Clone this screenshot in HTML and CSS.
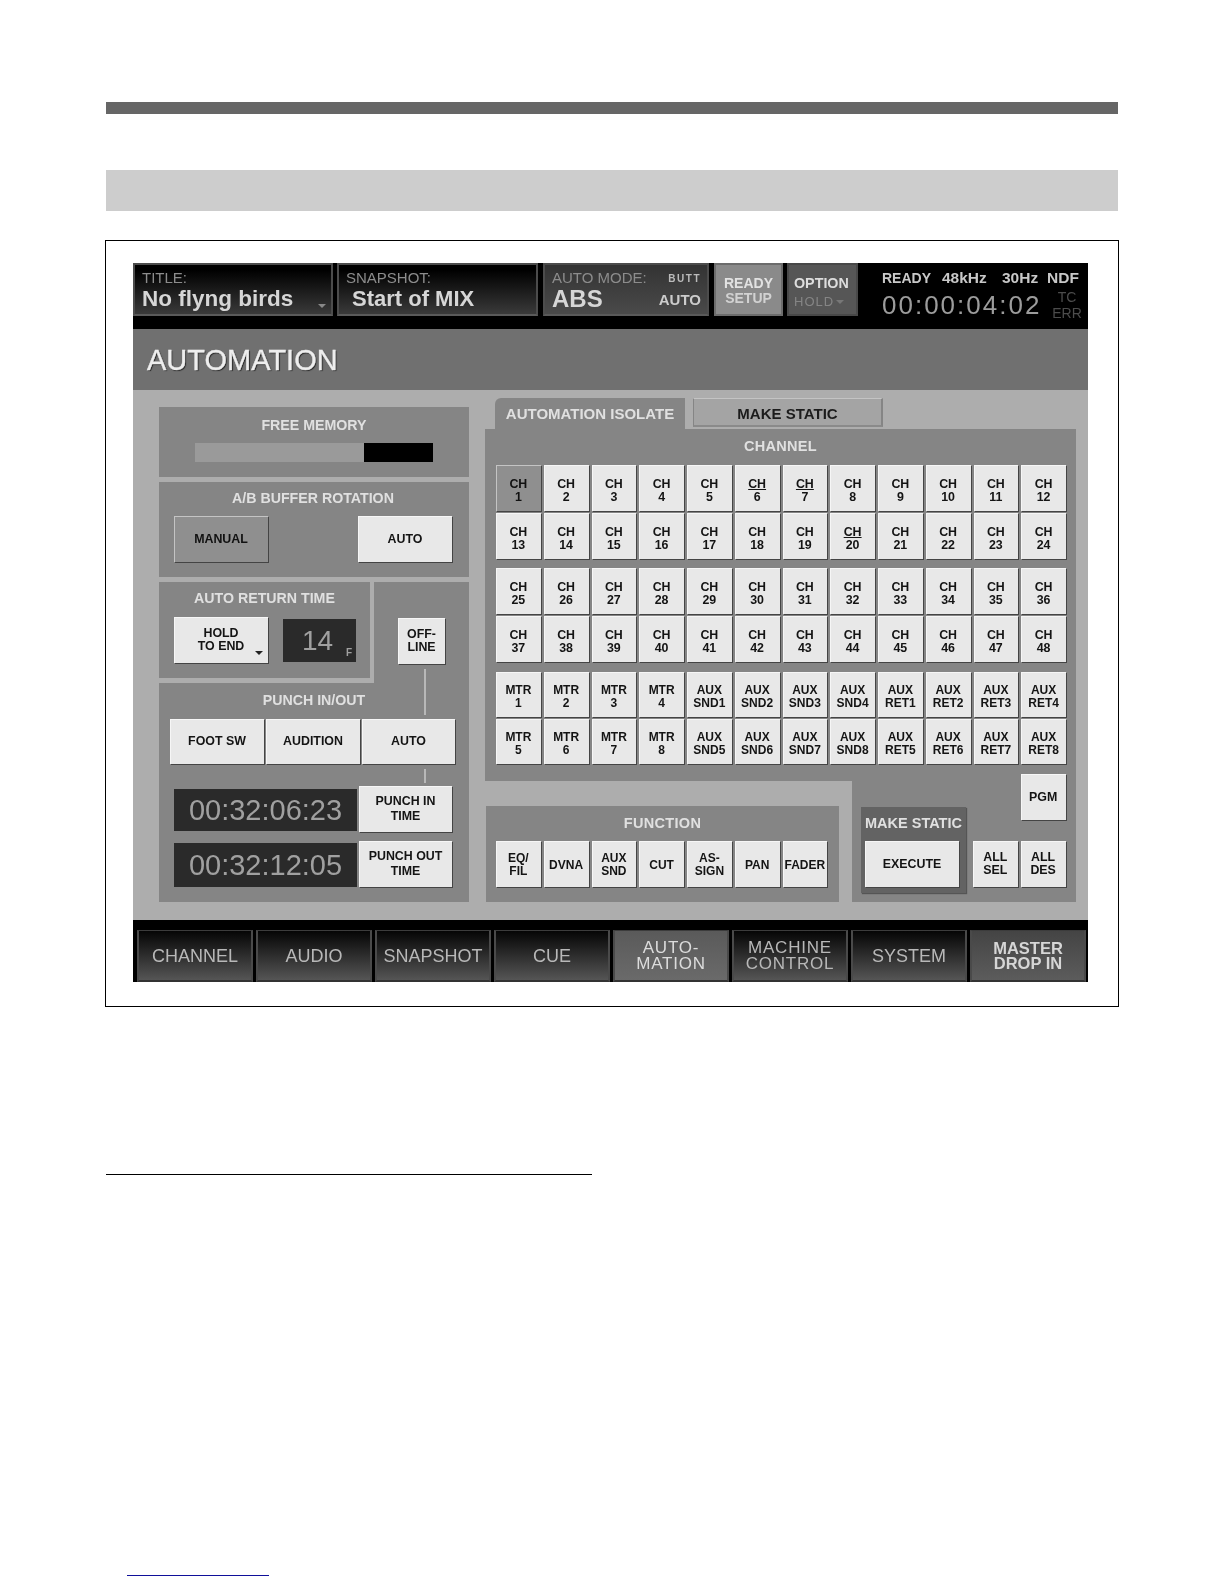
FILE: index.html
```html
<!DOCTYPE html>
<html lang="en">
<head>
<meta charset="utf-8">
<title>Automation</title>
<link rel="stylesheet" href="styles.css">
</head>
<body>
<div class="page">
  <div class="rule-top"></div>
  <div class="rule-grey"></div>
  <div class="figure">
    <div class="screen">
      <header class="head">
        <div class="field field-title">
          <div class="field-label">TITLE:</div>
          <div class="field-value">No flyng birds</div>
          <span class="arrow arrow-title"></span>
        </div>
        <div class="field field-snap">
          <div class="field-label">SNAPSHOT:</div>
          <div class="field-value indent">Start of MIX</div>
        </div>
        <div class="field field-mode">
          <div class="mode-top"><span class="field-label">AUTO MODE:</span><span class="butt">BUTT</span></div>
          <div class="mode-bottom"><span class="field-value abs">ABS</span><span class="mode-auto">AUTO</span></div>
        </div>
        <div class="ready">READY<br><span class="setup">SETUP</span></div>
        <div class="option">
          <div>OPTION</div>
          <div class="hold">HOLD<span class="arrow arrow-hold"></span></div>
        </div>
        <div class="info">
          <div class="info-top"><span>READY</span><span>48kHz</span><span>30Hz</span><span>NDF</span></div>
          <div class="info-bottom">
            <span class="tc">00:00:04:02</span>
            <span class="tc-side">TC<br>ERR</span>
          </div>
        </div>
      </header>

      <div class="title-bar">AUTOMATION</div>

      <main class="work">
        <section class="left">
          <div class="panel free">
            <div class="label">FREE MEMORY</div>
            <div class="meter"><div class="meter-used"></div></div>
          </div>
          <div class="panel buffer">
            <div class="label">A/B BUFFER ROTATION</div>
            <div class="buffer-row">
              <div class="key wide on">MANUAL</div>
              <div class="key wide">AUTO</div>
            </div>
          </div>
          <div class="group">
            <div class="panel ret">
              <div class="label">AUTO RETURN TIME</div>
              <div class="ret-row">
                <div class="key wide hold-key">HOLD<br>TO END<span class="arrow arrow-key"></span></div>
                <div class="lcd lcd-small">14<span class="lcd-unit">F</span></div>
              </div>
            </div>
            <div class="panel off"><div class="key off-key">OFF-<br>LINE</div></div>
            <div class="panel punch">
              <div class="label">PUNCH IN/OUT</div>
              <div class="punch-row">
                <div class="key">FOOT SW</div>
                <div class="key">AUDITION</div>
                <div class="key">AUTO</div>
              </div>
              <div class="time-row first">
                <div class="lcd lcd-time">00:32:06:23</div>
                <div class="key time-key">PUNCH IN<br>TIME</div>
              </div>
              <div class="time-row">
                <div class="lcd lcd-time tall">00:32:12:05</div>
                <div class="key time-key">PUNCH OUT<br>TIME</div>
              </div>
            </div>
            <span class="wire wire-a"></span>
            <span class="wire wire-b"></span>
          </div>
        </section>

        <section class="right">
          <div class="tabs">
            <div class="tab active">AUTOMATION ISOLATE</div>
            <div class="tab">MAKE STATIC</div>
          </div>
          <div class="channel">
            <div class="label channel-label">CHANNEL</div>
            <div class="keys">
              <div class="key on">CH<br>1</div><div class="key">CH<br>2</div><div class="key">CH<br>3</div><div class="key">CH<br>4</div><div class="key">CH<br>5</div><div class="key"><span><u>CH</u><br>6</span></div><div class="key"><span><u>CH</u><br>7</span></div><div class="key">CH<br>8</div><div class="key">CH<br>9</div><div class="key">CH<br>10</div><div class="key">CH<br>11</div><div class="key">CH<br>12</div>
              <div class="key">CH<br>13</div><div class="key">CH<br>14</div><div class="key">CH<br>15</div><div class="key">CH<br>16</div><div class="key">CH<br>17</div><div class="key">CH<br>18</div><div class="key">CH<br>19</div><div class="key"><span><u>CH</u><br>20</span></div><div class="key">CH<br>21</div><div class="key">CH<br>22</div><div class="key">CH<br>23</div><div class="key">CH<br>24</div>
            </div>
            <div class="keys second">
              <div class="key">CH<br>25</div><div class="key">CH<br>26</div><div class="key">CH<br>27</div><div class="key">CH<br>28</div><div class="key">CH<br>29</div><div class="key">CH<br>30</div><div class="key">CH<br>31</div><div class="key">CH<br>32</div><div class="key">CH<br>33</div><div class="key">CH<br>34</div><div class="key">CH<br>35</div><div class="key">CH<br>36</div>
              <div class="key">CH<br>37</div><div class="key">CH<br>38</div><div class="key">CH<br>39</div><div class="key">CH<br>40</div><div class="key">CH<br>41</div><div class="key">CH<br>42</div><div class="key">CH<br>43</div><div class="key">CH<br>44</div><div class="key">CH<br>45</div><div class="key">CH<br>46</div><div class="key">CH<br>47</div><div class="key">CH<br>48</div>
            </div>
            <div class="keys third">
              <div class="key">MTR<br>1</div><div class="key">MTR<br>2</div><div class="key">MTR<br>3</div><div class="key">MTR<br>4</div><div class="key">AUX<br>SND1</div><div class="key">AUX<br>SND2</div><div class="key">AUX<br>SND3</div><div class="key">AUX<br>SND4</div><div class="key">AUX<br>RET1</div><div class="key">AUX<br>RET2</div><div class="key">AUX<br>RET3</div><div class="key">AUX<br>RET4</div>
              <div class="key">MTR<br>5</div><div class="key">MTR<br>6</div><div class="key">MTR<br>7</div><div class="key">MTR<br>8</div><div class="key">AUX<br>SND5</div><div class="key">AUX<br>SND6</div><div class="key">AUX<br>SND7</div><div class="key">AUX<br>SND8</div><div class="key">AUX<br>RET5</div><div class="key">AUX<br>RET6</div><div class="key">AUX<br>RET7</div><div class="key">AUX<br>RET8</div>
            </div>
            <div class="lower">
              <div class="function-well">
                <div class="panel function">
                  <div class="label">FUNCTION</div>
                  <div class="function-keys">
                    <div class="key">EQ/<br>FIL</div><div class="key">DVNA</div><div class="key">AUX<br>SND</div><div class="key">CUT</div><div class="key">AS-<br>SIGN</div><div class="key">PAN</div><div class="key">FADER</div>
                  </div>
                </div>
              </div>
              <div class="lower-right">
                <div class="static-box">
                  <div class="label static-label">MAKE STATIC</div>
                  <div class="key wide execute">EXECUTE</div>
                </div>
                <div class="key pgm">PGM</div>
                <div class="key all-sel">ALL<br>SEL</div>
                <div class="key all-des">ALL<br>DES</div>
              </div>
            </div>
          </div>
        </section>
      </main>

      <nav class="nav">
        <div class="nav-btn">CHANNEL</div>
        <div class="nav-btn">AUDIO</div>
        <div class="nav-btn">SNAPSHOT</div>
        <div class="nav-btn">CUE</div>
        <div class="nav-btn two selected">AUTO-<br>MATION</div>
        <div class="nav-btn two">MACHINE<br>CONTROL</div>
        <div class="nav-btn">SYSTEM</div>
        <div class="nav-btn two master">MASTER<br>DROP IN</div>
      </nav>
    </div>
  </div>
  <div class="footnote-rule"></div>
  <div class="link-rule"></div>
</div>
</body>
</html>
```
FILE: styles.css
```css
* { box-sizing: border-box; }
html, body { margin: 0; padding: 0; background: #fff; }
body { font-family: "Liberation Sans", Arial, sans-serif; }

.page { width: 1224px; height: 1584px; padding-top: 102px; overflow: hidden; }
.rule-top { margin-left: 106px; width: 1012px; height: 12px; background: #666; }
.rule-grey { margin: 56px 0 0 106px; width: 1012px; height: 41px; background: #cdcdcd; }
.figure { margin: 29px 0 0 105px; width: 1014px; height: 767px; border: 1px solid #000; padding: 22px 0 0 27px; }
.footnote-rule { margin: 167px 0 0 106px; width: 486px; height: 1px; background: #000; }
.link-rule { margin: 400px 0 0 127px; width: 142px; height: 1px; background: #10109a; }

.screen { width: 955px; height: 719px; display: flex; flex-direction: column; filter: blur(0.5px); }

/* header */
.head { height: 66px; background: #000; display: flex; align-items: flex-start; color: #ccc; }
.field {
  position: relative; height: 53px; margin-right: 4px; padding: 5px 0 0 7px;
  border: 2px solid #4c4c4c; border-bottom-color: #5a5a5a;
  background: linear-gradient(#000 10%, #3a3a3a);
}
.field-title { width: 200px; }
.field-snap { width: 201px; margin-right: 5px; }
.field-mode { width: 166px; margin-right: 5px; background: linear-gradient(#333, #4a4a4a); }
.field-label { font-size: 15px; line-height: 16px; color: #8c8c8c; display: block; }
.field-value { font-size: 22.5px; font-weight: bold; line-height: 26px; color: #d6d6d6; margin-top: 0; }
.field-snap .field-value { font-size: 22px; }
.indent { padding-left: 6px; }
.field-mode .abs { font-size: 24px; }
.mode-top, .mode-bottom { display: flex; justify-content: space-between; align-items: center; padding-right: 6px; }
.butt { font-size: 10px; font-weight: bold; letter-spacing: 1.5px; color: #bbb; }
.mode-auto { font-size: 15px; font-weight: bold; color: #ccc; }
.arrow { position: absolute; width: 0; height: 0; border-left: 4px solid transparent; border-right: 4px solid transparent; border-top: 4px solid #888; }
.arrow-title { right: 5px; bottom: 6px; }
.arrow-hold { right: -11px; top: 6px; border-top-color: #777; }
.arrow-key { right: 5px; bottom: 8px; border-top-color: #222; }

.ready {
  width: 69px; height: 53px; margin-right: 4px; padding-top: 11px; text-align: center;
  background: #8a8a8a; border: 2px solid #6c6c6c;
  font-size: 14px; font-weight: bold; line-height: 15px; color: #e2e2e2;
}
.setup { color: #d2d2d2; }
.option {
  width: 71px; height: 53px; margin-right: 24px; padding: 10px 0 0 5px;
  background: #565656; border: 2px solid #484848;
  font-size: 14.3px; font-weight: bold; line-height: 16px; color: #ddd;
}
.hold { position: relative; width: 39px; margin-top: 3px; font-size: 13px; font-weight: normal; letter-spacing: 1px; color: #858585; }

.info { width: 200px; padding-top: 7px; }
.info-top { display: flex; font-size: 15.5px; font-weight: bold; line-height: 16px; color: #c8c8c8; }
.info-top span:first-child { width: 60px; font-size: 14px; }
.info-top span:nth-child(2) { width: 60px; }
.info-top span:nth-child(3) { width: 45px; }
.info-bottom { display: flex; align-items: center; margin-top: 3px; }
.tc { width: 170px; font-size: 26px; line-height: 32px; letter-spacing: 2px; color: #9c9c9c; }
.tc-side { width: 30px; text-align: center; font-size: 14px; line-height: 16px; color: #4c4c4c; }

.title-bar {
  height: 61px; padding: 17px 0 0 14px; background: #707070;
  font-size: 29px; line-height: 28px; color: #eee; text-shadow: 1px 1px 1px #222; -webkit-text-stroke: 0.4px #eee;
}

/* work area */
.work { height: 530px; background: #adadad; display: flex; align-items: flex-start; padding-left: 26px; }
.left { width: 310px; margin: 17px 16px 0 0; display: flex; flex-direction: column; gap: 5px; }
.panel { background: #858585; }
.label { font-size: 14.2px; font-weight: bold; line-height: 16px; text-align: center; color: #e0e0e0; }

.free { height: 70px; padding-top: 10px; }
.meter { margin: 10px 0 0 36px; width: 238px; height: 19px; background: #9a9a9a; display: flex; justify-content: flex-end; }
.meter-used { width: 69px; background: #000; }

.buffer { height: 95px; padding: 8px 17px 0 15px; }
.buffer .label { margin-bottom: 10px; }
.buffer-row { display: flex; justify-content: space-between; }

.key {
  display: flex; align-items: center; justify-content: center; text-align: center;
  background: #e8e8e8; color: #141414;
  font-size: 12.4px; font-weight: bold; line-height: 13px;
  box-shadow: 1px 1px 0 #444, inset 1px 1px 0 #f6f6f6;
}
.key.on { background: #8f8f8f; box-shadow: 1px 1px 0 #444, inset 1px 1px 0 #c4c4c4; color: #111; }
.wide { width: 94px; height: 46px; }

.group { position: relative; display: grid; grid-template-columns: 211px 95px; column-gap: 4px; grid-template-rows: 101px 219px; }
.ret { height: 96px; padding: 8px 0 0 15px; }
.ret .label { margin-bottom: 11px; padding-right: 15px; }
.ret-row { display: flex; align-items: flex-start; gap: 15px; }
.hold-key { position: relative; }
.lcd { background: #2a2a2a; color: #a0a0a0; }
.lcd-small { position: relative; width: 73px; height: 43px; margin-top: 2px; padding-left: 19px; font-size: 28px; line-height: 43px; }
.lcd-unit { position: absolute; right: 4px; bottom: 4px; font-size: 10px; line-height: 10px; font-weight: bold; }
.off { padding: 36px 0 0 24px; }
.off-key { width: 47px; height: 46px; }
.punch { grid-column: 1 / 3; padding: 9px 0 0 11px; }
.punch .label { margin-bottom: 11px; padding-right: 11px; }
.punch-row { display: grid; grid-template-columns: 94px 94px 93px; column-gap: 2px; height: 45px; }
.time-row { display: flex; align-items: flex-end; gap: 2px; margin: 9px 0 0 4px; }
.time-row.first { margin-top: 22px; }
.lcd-time { width: 183px; height: 42px; margin-bottom: 1px; text-align: center; font-size: 29px; line-height: 42px; }
.lcd-time.tall { height: 44px; margin-bottom: 0; line-height: 44px; }
.time-key { width: 93px; height: 46px; line-height: 15px; }
.wire { position: absolute; left: 265px; width: 2px; background: #b8b8b8; }
.wire-a { top: 87px; height: 46px; }
.wire-b { top: 187px; height: 14px; }

/* right */
.right { width: 591px; margin-top: 8px; }
.tabs { display: flex; gap: 8px; padding-left: 10px; height: 31px; }
.tab {
  width: 190px; height: 29px; text-align: center; background: #a4a4a4; color: #1c1c1c;
  font-size: 15px; font-weight: bold; line-height: 30px;
  border-top: 1px solid #c4c4c4; border-right: 2px solid #858585; border-left: 1px solid #858585; border-bottom: 2px solid #8a8a8a;
}
.tab.active { height: 32px; background: #858585; color: #e0e0e0; border: 0; border-radius: 6px 0 0 0; line-height: 32px; }
.channel { height: 473px; background: #858585; padding-top: 9px; display: flex; flex-direction: column; }
.channel-label { margin-bottom: 11px; font-size: 14.5px; letter-spacing: 0.3px; }
.keys { margin-left: 11px; width: 570px; display: grid; grid-template-columns: repeat(12, 1fr); column-gap: 3px; row-gap: 2px; grid-auto-rows: 46px; }
.keys .key { padding-top: 5px; }
.second { margin-top: 9px; }
.third { margin-top: 10px; grid-auto-rows: 45px; }
.third .key { font-size: 12px; line-height: 13px; }

.lower { flex: 1; margin-top: 10px; display: flex; }
.function-well { width: 367px; margin-top: 7px; padding: 25px 0 0 1px; background: #adadad; }
.function { width: 353px; height: 96px; padding: 9px 0 0 10px; }
.function .label { margin-bottom: 10px; padding-right: 10px; font-size: 14.5px; letter-spacing: 0.3px; }
.function-keys { width: 332px; display: grid; grid-template-columns: repeat(7, 44.75px); column-gap: 3px; grid-auto-rows: 46px; }
.function-keys .key { font-size: 12px; padding-top: 2px; }

.lower-right { flex: 1; display: grid; padding-left: 9px; grid-template-columns: 109px 44.75px 44.75px; column-gap: 3px; grid-template-rows: 46px 46px; row-gap: 21px; }
.static-box { grid-column: 1; grid-row: 1 / 3; align-self: start; margin-top: 33px; height: 86px; width: 105px; background: #636363; padding: 8px 0 0 4px; box-shadow: 1px 1px 1px #555; }
.static-label { width: 105px; margin-left: -4px; margin-bottom: 10px; font-size: 14.5px; white-space: nowrap; }
.execute { height: 46px; }
.pgm { grid-column: 3; grid-row: 1; }
.all-sel { grid-column: 2; grid-row: 2; }
.all-des { grid-column: 3; grid-row: 2; }

/* nav */
.nav { height: 62px; background: #000; padding: 10px 0 0 4px; display: flex; gap: 3px; }
.nav-btn {
  width: 116px; height: 52px; display: flex; align-items: center; justify-content: center; text-align: center;
  background: linear-gradient(#050505, #555);
  border-top: 1px solid #3c3c3c; border-right: 2px solid #4a4a4a; border-left: 2px solid #4a4a4a; border-bottom: 2px solid #333;
  font-size: 18px; line-height: 20px; color: #b8b8b8;
}
.two { font-size: 17px; line-height: 16px; letter-spacing: 0.8px; }
.selected { background: linear-gradient(#5a5a5a, #6a6a6a); color: #dcdcdc; }
.master { background: linear-gradient(#444, #5c5c5c); color: #d6d6d6; font-size: 16.5px; font-weight: bold; line-height: 15px; letter-spacing: 0; }
```
